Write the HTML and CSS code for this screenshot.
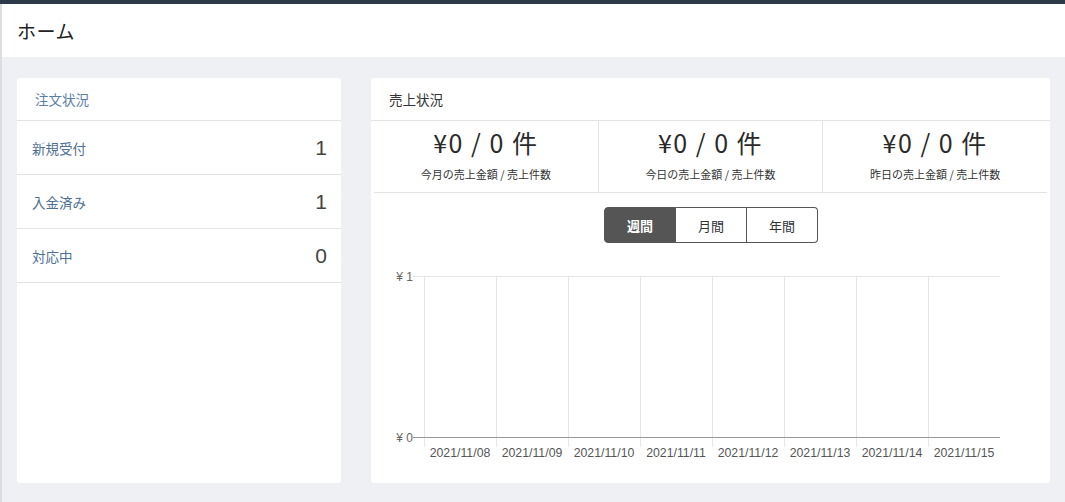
FILE: index.html
```html
<!DOCTYPE html>
<html lang="ja">
<head>
<meta charset="utf-8">
<link rel="stylesheet" href="styles.css">
</head>
<body>
<div class="topbar"></div>
<div class="page">
  <header class="header"><h1 class="title">ホーム</h1></header>
  <main class="content">
    <section class="card orders">
      <div class="card-head orders-head">注文状況</div>
      <div class="row"><span class="row-label">新規受付</span><span class="row-num">1</span></div>
      <div class="row"><span class="row-label">入金済み</span><span class="row-num">1</span></div>
      <div class="row"><span class="row-label">対応中</span><span class="row-num">0</span></div>
    </section>
    <section class="card sales">
      <div class="card-head sales-head">売上状況</div>
      <div class="stats">
        <div class="stat"><div class="stat-big">¥0 / 0 件</div><div class="stat-sub">今月の売上金額 / 売上件数</div></div>
        <div class="stat"><div class="stat-big">¥0 / 0 件</div><div class="stat-sub">今日の売上金額 / 売上件数</div></div>
        <div class="stat"><div class="stat-big">¥0 / 0 件</div><div class="stat-sub">昨日の売上金額 / 売上件数</div></div>
      </div>
      <div class="btns">
        <button class="btn active">週間</button><button class="btn">月間</button><button class="btn">年間</button>
      </div>
      <svg class="chart" width="679" height="227" viewBox="0 0 679 227">
        <g stroke="#e6e6e6" stroke-width="1">
          <line x1="42" y1="33.5" x2="629" y2="33.5"/>
          <line x1="53.5" y1="33" x2="53.5" y2="204"/>
          <line x1="125.5" y1="33" x2="125.5" y2="204"/>
          <line x1="197.5" y1="33" x2="197.5" y2="204"/>
          <line x1="269.5" y1="33" x2="269.5" y2="204"/>
          <line x1="341.5" y1="33" x2="341.5" y2="204"/>
          <line x1="413.5" y1="33" x2="413.5" y2="204"/>
          <line x1="485.5" y1="33" x2="485.5" y2="204"/>
          <line x1="557.5" y1="33" x2="557.5" y2="204"/>
        </g>
        <line x1="42" y1="194.5" x2="629" y2="194.5" stroke="#9a9a9a" stroke-width="1"/>
        <g class="axis-y" text-anchor="end">
          <text x="42" y="38">¥ 1</text>
          <text x="42" y="199">¥ 0</text>
        </g>
        <g class="axis-x" text-anchor="middle">
          <text x="89" y="214">2021/11/08</text>
          <text x="161" y="214">2021/11/09</text>
          <text x="233" y="214">2021/11/10</text>
          <text x="305" y="214">2021/11/11</text>
          <text x="377" y="214">2021/11/12</text>
          <text x="449" y="214">2021/11/13</text>
          <text x="521" y="214">2021/11/14</text>
          <text x="593" y="214">2021/11/15</text>
        </g>
      </svg>
    </section>
  </main>
</div>
</body>
</html>
```

FILE: styles.css
```css
* { box-sizing: border-box; }
html, body { margin: 0; padding: 0; }
body {
  background: #eff0f4;
  font-family: "Noto Sans CJK JP", "Noto Sans", sans-serif;
  color: #333;
  height: 502px;
  overflow: hidden;
}
.topbar { height: 4px; background: #2c3a4a; }
.page {
  border-left: 2px solid #dcdde2;
  height: 498px;
}
.header {
  background: #fff;
  height: 53px;
  display: flex;
  align-items: center;
  padding-left: 15px;
}
.title {
  margin: 0;
  font-size: 19px;
  font-weight: 400;
  color: #222;
  letter-spacing: 0.5px;
}
.content {
  display: flex;
  padding: 21px 15px 0 15px;
  gap: 30px;
}
.card {
  background: #fff;
  border-radius: 3px;
  height: 405px;
}
.orders { width: 324px; }
.sales { width: 679px; }
.card-head {
  height: 43px;
  display: flex;
  align-items: center;
  font-size: 13.5px;
  border-bottom: 1px solid #e3e3e3;
}
.orders-head { padding-left: 18px; color: #5b7fa8; }
.sales-head { padding-left: 18px; color: #333; }
.row {
  height: 54px;
  display: flex;
  align-items: center;
  justify-content: space-between;
  padding: 0 14px 0 15px;
  border-bottom: 1px solid #e3e3e3;
}
.row-label { font-size: 13.5px; color: #4f6f95; }
.row-num {
  font-family: "Liberation Sans", Arial, sans-serif;
  font-size: 21px;
  color: #444;
}
.stats {
  display: flex;
  margin: 0 3px;
  height: 72px;
  border-bottom: 1px solid #e3e3e3;
}
.stat {
  flex: 1;
  display: flex;
  flex-direction: column;
  align-items: center;
  border-left: 1px solid #e3e3e3;
}
.stat:first-child { border-left: none; }
.stat-big {
  font-size: 25px;
  color: #2a2a2a;
  margin-top: 4px;
  line-height: 34px;
  letter-spacing: 1.5px;
}
.stat-sub {
  font-size: 11px;
  color: #333;
  margin-top: 8px;
  line-height: 15px;
}
.btns {
  display: flex;
  justify-content: center;
  margin-top: 14px;
  padding-left: 1px;
}
.btn {
  width: 71px;
  height: 36px;
  background: #fff;
  border: 1px solid #555;
  border-left: none;
  font-family: "Noto Sans CJK JP", sans-serif;
  font-size: 13px;
  color: #333;
  padding: 0;
}
.btn:first-child { border-left: 1px solid #555; border-radius: 4px 0 0 4px; width: 72px; }
.btn:last-child { border-radius: 0 4px 4px 0; }
.btn.active { background: #555; color: #fff; font-weight: 700; }
.chart { display: block; }
.axis-y text {
  font-family: "Liberation Sans", Arial, sans-serif;
  font-size: 12px;
  fill: #666;
}
.axis-x text {
  font-family: "Liberation Sans", Arial, sans-serif;
  font-size: 12.3px;
  fill: #555;
}
```
